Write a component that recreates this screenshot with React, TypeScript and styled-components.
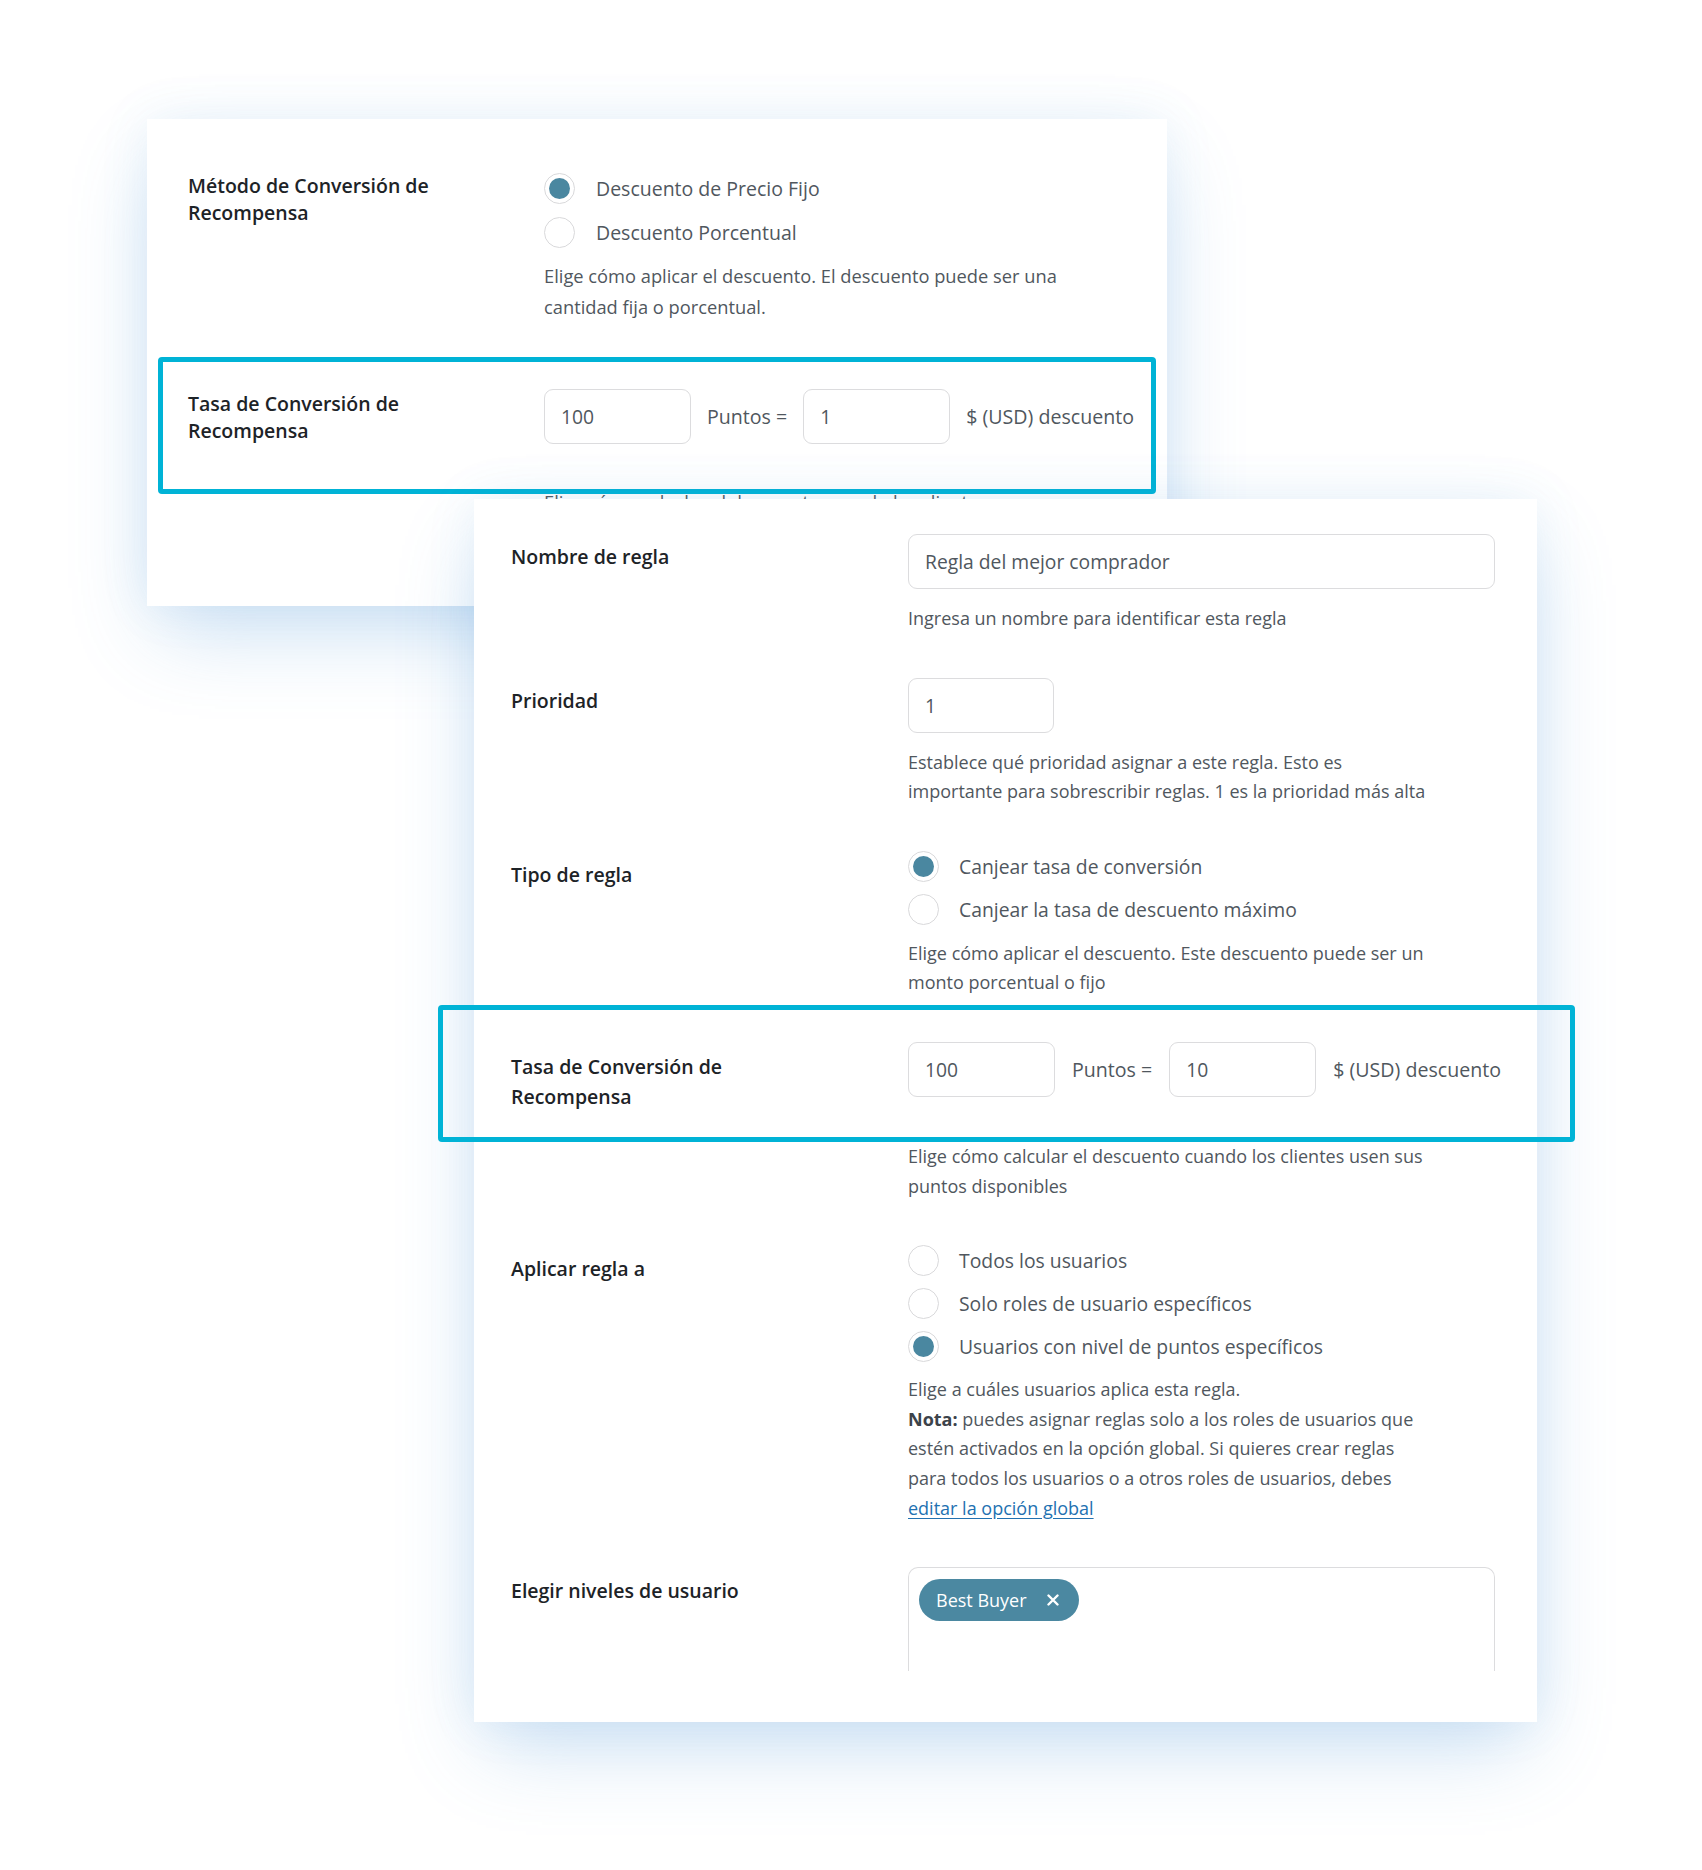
import React from "react";
import styled, { createGlobalStyle } from "styled-components";

const GlobalStyle = createGlobalStyle`
  html, body {
    margin: 0;
    padding: 0;
    background: #ffffff;
  }
  body {
    font-family: "Open Sans", "Noto Sans", "Liberation Sans", Arial, sans-serif;
    -webkit-font-smoothing: antialiased;
  }
  *, *::before, *::after {
    box-sizing: border-box;
  }
`;

const Canvas = styled.main`
  position: relative;
  width: 1702px;
  height: 1870px;
  overflow: hidden;
  background: #ffffff;
`;

const Card = styled.section<{
  $x: number;
  $y: number;
  $w: number;
  $h: number;
  $pad: string;
  $gap: number;
}>`
  position: absolute;
  left: ${(p) => p.$x}px;
  top: ${(p) => p.$y}px;
  width: ${(p) => p.$w}px;
  height: ${(p) => p.$h}px;
  padding: ${(p) => p.$pad};
  background: #ffffff;
  overflow: hidden;
  display: flex;
  flex-direction: column;
  gap: ${(p) => p.$gap}px;
  box-shadow: 0 34px 80px -12px rgba(86, 156, 218, 0.32),
    0 0 46px rgba(86, 156, 218, 0.1);
`;

const Highlight = styled.div<{ $x: number; $y: number; $w: number; $h: number }>`
  position: absolute;
  left: ${(p) => p.$x}px;
  top: ${(p) => p.$y}px;
  width: ${(p) => p.$w}px;
  height: ${(p) => p.$h}px;
  border: 5px solid #00b3d6;
  border-radius: 4px;
  pointer-events: none;
`;

const Row = styled.div<{ $labelCol: number }>`
  display: grid;
  grid-template-columns: ${(p) => p.$labelCol}px 1fr;
  align-items: start;
`;

const Label = styled.div<{ $lh: number; $top: number }>`
  font-size: 19.5px;
  font-weight: 600;
  color: #1d2327;
  line-height: ${(p) => p.$lh}px;
  margin-top: ${(p) => p.$top}px;
`;

const Control = styled.div`
  display: flex;
  flex-direction: column;
  align-items: flex-start;
`;

const RadioList = styled.div<{ $gap: number }>`
  display: flex;
  flex-direction: column;
  gap: ${(p) => p.$gap}px;
`;

const RadioItem = styled.label<{ $size: number; $space: number }>`
  display: flex;
  align-items: center;
  gap: ${(p) => p.$space}px;
  height: 31px;
  font-size: ${(p) => p.$size}px;
  color: #50575e;
  white-space: nowrap;
`;

const Circle = styled.span<{ $on: boolean }>`
  width: 31px;
  height: 31px;
  border-radius: 50%;
  border: 1px solid #d9d9db;
  background: #ffffff;
  display: grid;
  place-items: center;
  flex: none;

  &::after {
    content: "";
    width: 21px;
    height: 21px;
    border-radius: 50%;
    background: ${(p) => (p.$on ? "#4a87a0" : "transparent")};
  }
`;

const Help = styled.p<{ $top: number; $lh: number; $size: number }>`
  margin: ${(p) => p.$top}px 0 0;
  font-size: ${(p) => p.$size}px;
  line-height: ${(p) => p.$lh}px;
  color: #50575e;
  white-space: nowrap;

  strong {
    font-weight: 700;
    color: #3c434a;
  }
`;

const HelpLink = styled.a`
  color: #2271b1;
  text-decoration: underline;
  text-underline-offset: 3px;
`;

const Field = styled.input<{ $w: number }>`
  width: ${(p) => p.$w}px;
  height: 55px;
  padding: 0 16px;
  border: 1px solid #dcdcde;
  border-radius: 9px;
  background: #ffffff;
  font-family: inherit;
  font-size: 19.3px;
  color: #50575e;
  outline: none;
`;

const RateLine = styled.div<{ $gap: number }>`
  display: flex;
  align-items: center;
  gap: ${(p) => p.$gap}px;
`;

const RateText = styled.span`
  font-size: 19.6px;
  color: #50575e;
  white-space: nowrap;
`;

const TagBox = styled.div`
  width: 587px;
  height: 104px;
  padding: 11px 10px;
  border: 1px solid #dcdcde;
  border-bottom: none;
  border-radius: 10px 10px 0 0;
  display: flex;
  align-items: flex-start;
`;

const Tag = styled.span`
  display: inline-flex;
  align-items: center;
  gap: 20px;
  height: 42px;
  padding: 0 20px 0 17px;
  border-radius: 21px;
  background: #4b88a1;
  color: #ffffff;
  font-size: 18px;
  font-weight: 500;
`;

type RadioProps = { on?: boolean; size: number; space: number; children: React.ReactNode };

function Radio({ on, size, space, children }: RadioProps) {
  return (
    <RadioItem $size={size} $space={space}>
      <Circle $on={!!on} />
      {children}
    </RadioItem>
  );
}

function CloseX() {
  return (
    <svg width="12" height="12" viewBox="0 0 12 12" aria-hidden="true">
      <path
        d="M1.5 1.5 L10.5 10.5 M10.5 1.5 L1.5 10.5"
        stroke="#fff"
        strokeWidth="2.4"
        strokeLinecap="round"
      />
    </svg>
  );
}

export default function App() {
  return (
    <>
      <GlobalStyle />
      <Canvas>
        <Card $x={147} $y={119} $w={1020} $h={487} $pad="54px 0 0 41px" $gap={67}>
          <Row $labelCol={356}>
            <Label $lh={27} $top={-1}>
              Método de Conversión de
              <br />
              Recompensa
            </Label>
            <Control>
              <RadioList $gap={13}>
                <Radio on size={19.5} space={21}>Descuento de Precio Fijo</Radio>
                <Radio size={19.5} space={21}>Descuento Porcentual</Radio>
              </RadioList>
              <Help $top={13} $lh={30.5} $size={18.3}>
                Elige cómo aplicar el descuento. El descuento puede ser una
                <br />
                cantidad fija o porcentual.
              </Help>
            </Control>
          </Row>
          <Row $labelCol={356}>
            <Label $lh={27} $top={1}>
              Tasa de Conversión de
              <br />
              Recompensa
            </Label>
            <Control>
              <RateLine $gap={16}>
                <Field $w={147} readOnly value="100" />
                <RateText>Puntos =</RateText>
                <Field $w={147} readOnly value="1" />
                <RateText>$ (USD) descuento</RateText>
              </RateLine>
              <Help $top={43} $lh={30} $size={18.3}>
                Elige cómo calcular el descuento cuando los clientes usen sus
                <br />
                puntos disponibles
              </Help>
            </Control>
          </Row>
        </Card>

        <Highlight $x={158} $y={357} $w={998} $h={137} />

        <Card $x={474} $y={499} $w={1063} $h={1223} $pad="35px 42px 0 37px" $gap={44}>
          <Row $labelCol={397}>
            <Label $lh={30} $top={8}>Nombre de regla</Label>
            <Control>
              <Field $w={587} readOnly value="Regla del mejor comprador" />
              <Help $top={15} $lh={29.6} $size={18}>
                Ingresa un nombre para identificar esta regla
              </Help>
            </Control>
          </Row>

          <Row $labelCol={397}>
            <Label $lh={30} $top={8}>Prioridad</Label>
            <Control>
              <Field $w={146} readOnly value="1" />
              <Help $top={15} $lh={29.6} $size={18}>
                Establece qué prioridad asignar a este regla. Esto es
                <br />
                importante para sobrescribir reglas. 1 es la prioridad más alta
              </Help>
            </Control>
          </Row>

          <Row $labelCol={397}>
            <Label $lh={30} $top={9}>Tipo de regla</Label>
            <Control>
              <RadioList $gap={12}>
                <Radio on size={19.35} space={20}>Canjear tasa de conversión</Radio>
                <Radio size={19.35} space={20}>Canjear la tasa de descuento máximo</Radio>
              </RadioList>
              <Help $top={14} $lh={29.6} $size={18}>
                Elige cómo aplicar el descuento. Este descuento puede ser un
                <br />
                monto porcentual o fijo
              </Help>
            </Control>
          </Row>

          <Row $labelCol={397}>
            <Label $lh={30} $top={10}>
              Tasa de Conversión de
              <br />
              Recompensa
            </Label>
            <Control>
              <RateLine $gap={17}>
                <Field $w={147} readOnly value="100" />
                <RateText>Puntos =</RateText>
                <Field $w={147} readOnly value="10" />
                <RateText>$ (USD) descuento</RateText>
              </RateLine>
              <Help $top={45} $lh={29.6} $size={18}>
                Elige cómo calcular el descuento cuando los clientes usen sus
                <br />
                puntos disponibles
              </Help>
            </Control>
          </Row>

          <Row $labelCol={397}>
            <Label $lh={30} $top={9}>Aplicar regla a</Label>
            <Control>
              <RadioList $gap={12}>
                <Radio size={19.35} space={20}>Todos los usuarios</Radio>
                <Radio size={19.35} space={20}>Solo roles de usuario específicos</Radio>
                <Radio on size={19.35} space={20}>Usuarios con nivel de puntos específicos</Radio>
              </RadioList>
              <Help $top={13} $lh={29.6} $size={18}>
                Elige a cuáles usuarios aplica esta regla.
                <br />
                <strong>Nota:</strong> puedes asignar reglas solo a los roles de usuarios que
                <br />
                estén activados en la opción global. Si quieres crear reglas
                <br />
                para todos los usuarios o a otros roles de usuarios, debes
                <br />
                <HelpLink href="#">editar la opción global</HelpLink>
              </Help>
            </Control>
          </Row>

          <Row $labelCol={397}>
            <Label $lh={30} $top={9}>Elegir niveles de usuario</Label>
            <Control>
              <TagBox>
                <Tag>
                  Best Buyer
                  <CloseX />
                </Tag>
              </TagBox>
            </Control>
          </Row>
        </Card>

        <Highlight $x={438} $y={1005} $w={1137} $h={137} />
      </Canvas>
    </>
  );
}
